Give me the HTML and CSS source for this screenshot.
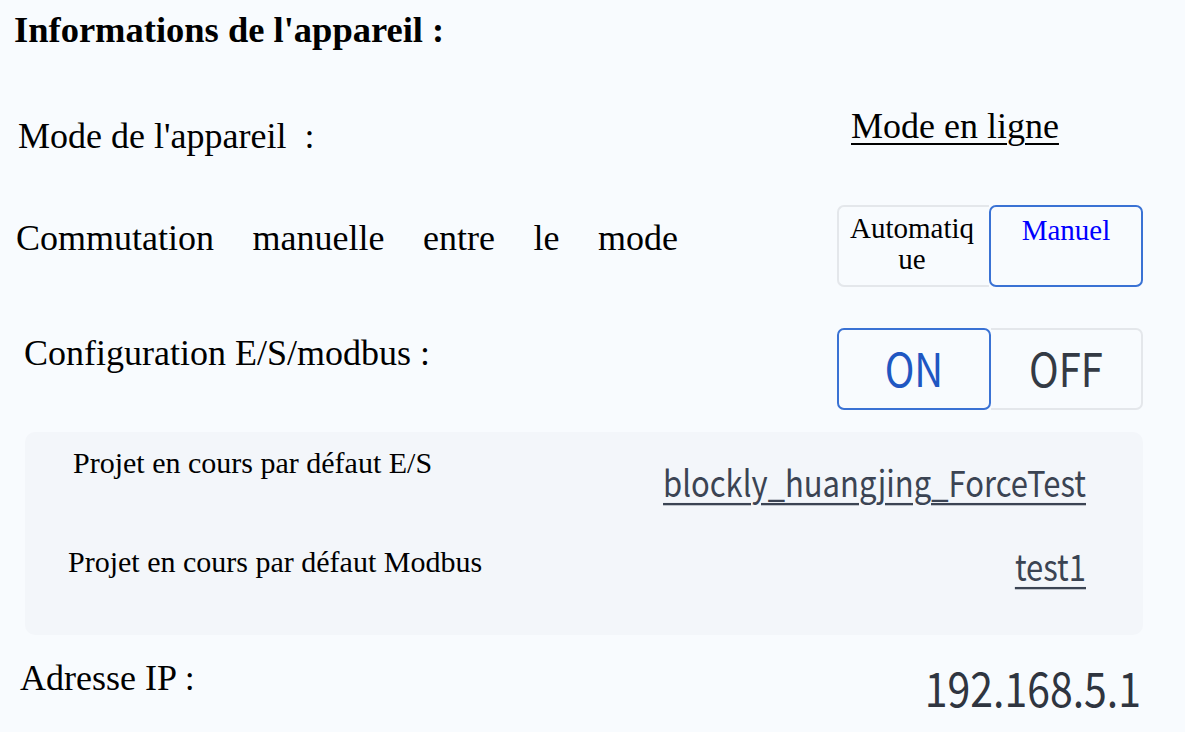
FILE: index.html
```html
<!DOCTYPE html>
<html lang="fr">
<head>
<meta charset="utf-8">
<title>Informations de l'appareil</title>
<link rel="stylesheet" href="styles.css">
</head>
<body>
<div class="page">
  <h1 class="title">Informations de l'appareil :</h1>

  <div class="row row-mode">
    <div class="label label-mode">Mode de l'appareil &nbsp;:</div>
    <div class="ctl">
      <a class="mode-link">Mode en ligne</a>
    </div>
  </div>

  <div class="row row-switch">
    <div class="label label-switch">Commutation manuelle entre le mode</div>
    <div class="ctl seg">
      <div class="seg-btn seg-left serif">Automatique</div>
      <div class="seg-btn seg-right serif active manual">Manuel</div>
    </div>
  </div>

  <div class="row row-config">
    <div class="label label-config">Configuration E/S/modbus :</div>
    <div class="ctl seg">
      <div class="seg-btn seg-left sans active on"><span class="tall">ON</span></div>
      <div class="seg-btn seg-right sans off"><span class="tall">OFF</span></div>
    </div>
  </div>

  <div class="panel">
    <div class="prow prow-a">
      <div class="plabel plabel-a">Projet en cours par défaut E/S</div>
      <a class="pvalue pvalue-a tall">blockly_huangjing_ForceTest</a>
    </div>
    <div class="prow prow-b">
      <div class="plabel plabel-b">Projet en cours par défaut Modbus</div>
      <a class="pvalue pvalue-b tall">test1</a>
    </div>
  </div>

  <div class="row row-ip">
    <div class="label label-ip">Adresse IP :</div>
    <div class="ip tall">192.168.5.1</div>
  </div>
</div>
</body>
</html>
```

FILE: styles.css
```css
html, body {
  margin: 0;
  padding: 0;
  background: #f8fbfe;
}

.page {
  width: 1185px;
  height: 732px;
  padding-right: 42px;
  box-sizing: border-box;
  font-family: "Liberation Serif", "Times New Roman", serif;
  color: #000;
  overflow: hidden;
}

.title {
  margin: 12px 0 0 14px;
  font-size: 36.5px;
  line-height: 36px;
  font-weight: bold;
}

.row {
  display: flex;
  justify-content: space-between;
  align-items: flex-start;
}

.label {
  font-size: 36px;
  line-height: 36px;
  white-space: nowrap;
}

.ctl {
  width: 306px;
  flex: none;
}

.tall {
  display: inline-block;
  transform: scale(1, 1.16);
  transform-origin: 50% 50%;
}

/* Row: mode */
.row-mode {
  margin-top: 60px;
  height: 60px;
}
.label-mode {
  margin: 10px 0 0 18px;
}
.mode-link {
  display: inline-block;
  margin-left: 14px;
  font-size: 36px;
  line-height: 36px;
  text-decoration: underline;
  text-underline-offset: 5px;
  text-decoration-thickness: 2px;
}

/* Row: switch */
.row-switch {
  margin-top: 37px;
  height: 82px;
}
.label-switch {
  margin: 15px 0 0 16px;
  width: 662px;
  text-align: justify;
  text-align-last: justify;
  white-space: normal;
}

/* Segmented buttons */
.seg {
  display: flex;
  height: 82px;
}
.seg-btn {
  flex: 1 1 0;
  box-sizing: border-box;
  border: 2px solid #e4e7eb;
  background: #f8fbfe;
  text-align: center;
}
.seg-left {
  border-radius: 7px 0 0 7px;
  border-right: none;
}
.seg-right {
  border-radius: 0 7px 7px 0;
  border-left: none;
}
.seg-btn.active {
  border: 2px solid #3a72d4;
  border-radius: 7px;
}
.serif {
  font-size: 29px;
  line-height: 31px;
  padding: 6px 12px 0 8px;
  overflow-wrap: anywhere;
}
.manual {
  color: #0000ff;
  padding: 8px 10px 0;
}
.sans {
  font-family: "Noto Sans CJK SC", "Noto Sans", sans-serif;
  font-size: 40px;
  display: flex;
  align-items: center;
  justify-content: center;
  line-height: 1;
  padding-bottom: 4px;
}
.on {
  color: #1f57c2;
}
.off {
  color: #343a44;
}

/* Row: config */
.row-config {
  margin-top: 41px;
  height: 82px;
}
.label-config {
  margin: 7px 0 0 24px;
}

/* Panel */
.panel {
  margin: 22px 0 0 25px;
  height: 203px;
  background: #f3f6fa;
  border-radius: 10px;
  box-sizing: border-box;
  padding-right: 57px;
}
.prow {
  display: flex;
  justify-content: space-between;
  align-items: flex-start;
}
.prow-a {
  height: 80px;
}
.prow-b {
  height: 123px;
}
.plabel {
  font-size: 30px;
  line-height: 30px;
  white-space: nowrap;
}
.plabel-a {
  margin: 16px 0 0 48px;
}
.plabel-b {
  margin: 35px 0 0 43px;
}
.pvalue {
  font-family: "Noto Sans CJK SC", "Noto Sans", sans-serif;
  font-size: 31px;
  line-height: 31px;
  color: #3b4453;
  text-decoration: underline;
  text-decoration-thickness: 2px;
  text-underline-offset: 5px;
}
.pvalue-a {
  margin-top: 34px;
}
.pvalue-b {
  margin-top: 38px;
}

/* Row: IP */
.row-ip {
  height: 97px;
}
.label-ip {
  margin: 25px 0 0 20px;
}
.ip {
  margin-top: 31px;
  font-family: "Noto Sans CJK SC", "Noto Sans", sans-serif;
  font-size: 41px;
  line-height: 41px;
  color: #2f3540;
  margin-right: 2px;
}
```
